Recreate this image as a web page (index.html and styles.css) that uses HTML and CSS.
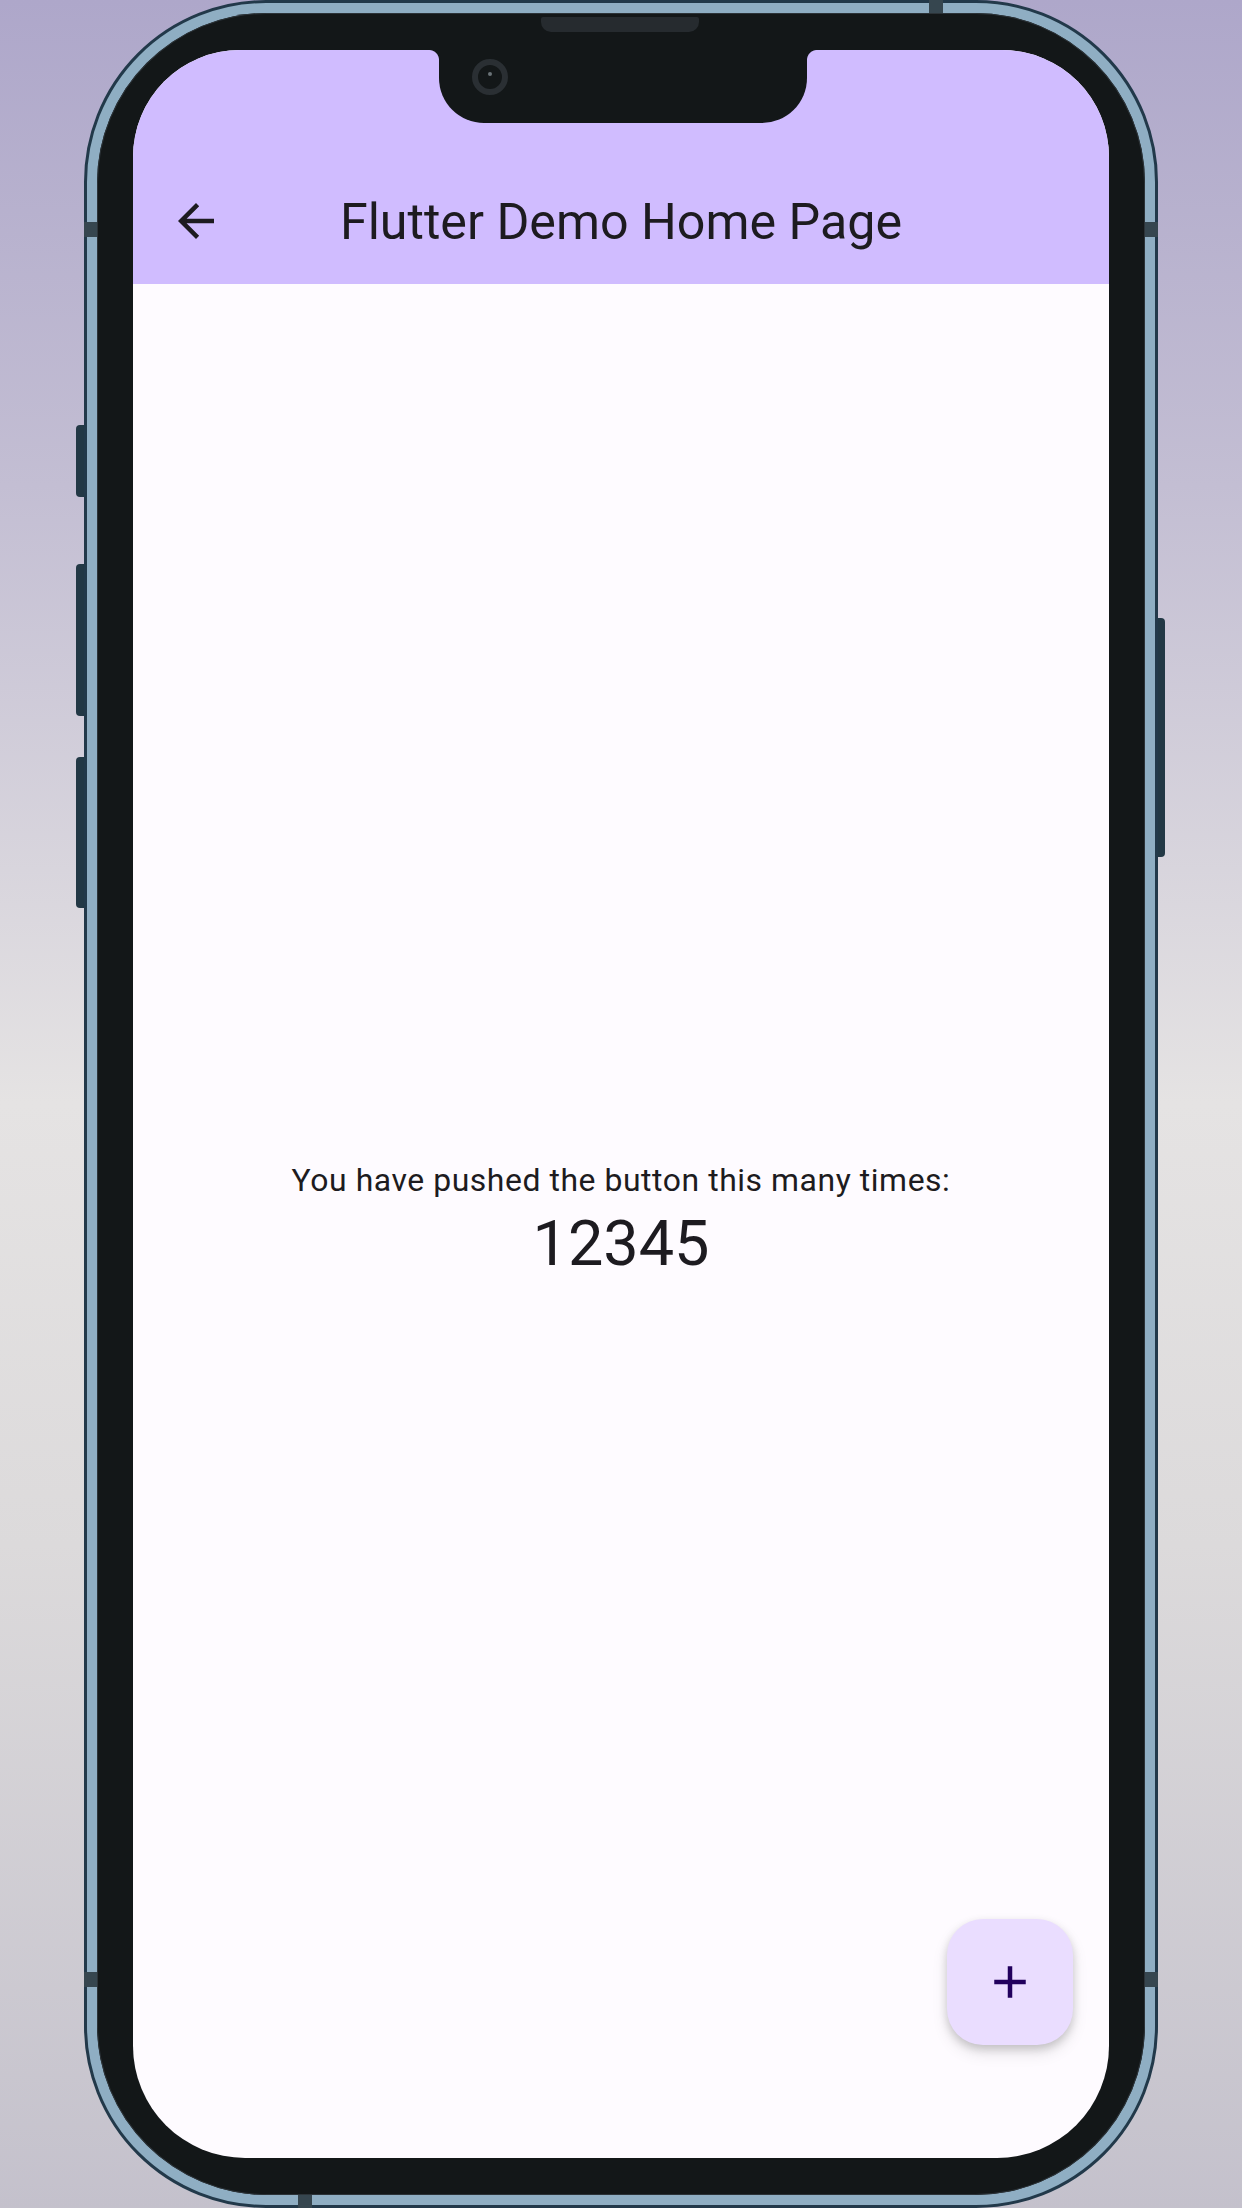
FILE: index.html
```html
<!DOCTYPE html>
<html lang="en">
<head>
<meta charset="utf-8">
<title>Flutter Demo Home Page</title>
<link rel="stylesheet" href="styles.css">
</head>
<body>
<div class="stage">
  <div class="phone">
    <span class="side-btn side-l1"></span>
    <span class="side-btn side-l2"></span>
    <span class="side-btn side-l3"></span>
    <span class="side-btn side-r1"></span>
    <span class="band band-lt"></span>
    <span class="band band-lb"></span>
    <span class="band band-rt"></span>
    <span class="band band-rb"></span>
    <span class="band-h band-top"></span>
    <span class="band-h band-bottom"></span>
    <div class="bezel">
      <div class="screen">
        <header class="appbar">
          <div class="statusbar"></div>
          <div class="toolbar">
            <button class="leading" aria-label="Back">
              <svg viewBox="0 0 24 24" width="54" height="54"><path d="M20 11H7.83l5.590-5.59L12 4l-8 8 8 8 1.41-1.41L7.83 13H20v-2z"/></svg>
            </button>
            <h1 class="title">Flutter Demo Home Page</h1>
            <span class="trailing"></span>
          </div>
        </header>
        <main class="content">
          <p class="label">You have pushed the button this many times:</p>
          <p class="count">12345</p>
        </main>
        <button class="fab" aria-label="Increment">
          <svg viewBox="0 0 24 24" width="54" height="54"><path d="M19 13h-6v6h-2v-6H5v-2h6V5h2v6h6v2z"/></svg>
        </button>
      </div>
    </div>
    <div class="speaker"></div>
    <div class="notch">
      <span class="ear ear-l"></span>
      <span class="ear ear-r"></span>
      <span class="camera"><span class="lens"></span></span>
    </div>
  </div>
</div>
</body>
</html>
```
FILE: styles.css
```css
* { box-sizing: border-box; }

html, body {
  margin: 0;
  padding: 0;
}

body {
  width: 1242px;
  height: 2208px;
  overflow: hidden;
  font-family: Roboto, "Noto Sans", sans-serif;
  background: linear-gradient(180deg, #aea7ca 0%, #c3bed3 22%, #e5e3e3 50%, #dcdadb 70%, #c4c1cc 100%);
}

.stage {
  display: flex;
  justify-content: center;
  height: 2208px;
}

.phone {
  position: relative;
  width: 1074px;
  height: 2208px;
  border: 3px solid #22394a;
  border-radius: 182px;
  background: #8faec3;
  padding: 10px;
}

.side-btn {
  position: absolute;
  width: 8px;
  background: #223845;
  z-index: -1;
}
.side-l1, .side-l2, .side-l3 { left: -11px; border-radius: 4px 0 0 4px; }
.side-l1 { top: 422px; height: 72px; }
.side-l2 { top: 561px; height: 152px; }
.side-l3 { top: 754px; height: 151px; }
.side-r1 { right: -10px; top: 615px; height: 239px; border-radius: 0 4px 4px 0; }

.band {
  position: absolute;
  width: 13px;
  height: 15px;
  background: #36464f;
}
.band-lt { left: -3px; top: 219px; }
.band-lb { left: -3px; top: 1969px; }
.band-rt { right: -3px; top: 219px; }
.band-rb { right: -3px; top: 1969px; }

.band-h {
  position: absolute;
  width: 14px;
  height: 13px;
  background: #36464f;
}
.band-top { top: -3px; left: 842px; }
.band-bottom { bottom: -3px; left: 211px; }

.bezel {
  height: 100%;
  background: #131718;
  border-radius: 170px;
  padding: 37px 36px;
  box-shadow: inset 0 0 0 1px #2c3338;
}

.screen {
  position: relative;
  height: 100%;
  border-radius: 107px 107px 112px 112px;
  overflow: hidden;
  background: #fefbff;
  display: flex;
  flex-direction: column;
}

.appbar {
  background: #d0bcff;
  flex: none;
}

.statusbar { height: 108px; }

.toolbar {
  height: 126px;
  display: grid;
  grid-template-columns: 126px 1fr 126px;
  align-items: center;
}

.leading {
  width: 126px;
  height: 126px;
  border: 0;
  padding: 0;
  background: transparent;
  display: flex;
  align-items: center;
  justify-content: center;
}
.leading svg { fill: #1d1b20; display: block; }

.title {
  margin: 0;
  text-align: center;
  font-weight: 400;
  font-size: 50.2px;
  line-height: 63px;
  color: #1d1b20;
  white-space: nowrap;
}

.content {
  flex: 1;
  display: flex;
  flex-direction: column;
  align-items: center;
  justify-content: center;
  color: #1d1b20;
}

.label {
  margin: 0;
  font-size: 31.9px;
  line-height: 45px;
  letter-spacing: 0.56px;
}

.count {
  margin: 0;
  font-size: 63px;
  line-height: 81px;
}

.fab {
  position: absolute;
  right: 36px;
  bottom: 113px;
  width: 126px;
  height: 126px;
  border: 0;
  padding: 0;
  border-radius: 36px;
  background: #eaddff;
  display: flex;
  align-items: center;
  justify-content: center;
  box-shadow: 0 4px 8px rgba(0, 0, 0, 0.16), 0 8px 16px rgba(0, 0, 0, 0.10);
}
.fab svg { fill: #21005d; display: block; }

.speaker {
  position: absolute;
  left: 454px;
  top: 14px;
  width: 158px;
  height: 15px;
  background: #262b2f;
  border-radius: 2px 2px 10px 10px;
}

.notch {
  position: absolute;
  left: 352px;
  top: 47px;
  width: 368px;
  height: 73px;
  background: #131718;
  border-radius: 0 0 45px 45px;
}

.ear {
  position: absolute;
  top: 0;
  width: 10px;
  height: 10px;
}
.ear-l {
  left: -10px;
  background: radial-gradient(circle at 0 100%, transparent 9.5px, #131718 10.5px);
}
.ear-r {
  right: -10px;
  background: radial-gradient(circle at 100% 100%, transparent 9.5px, #131718 10.5px);
}

.camera {
  position: absolute;
  left: 33px;
  top: 9px;
  width: 36px;
  height: 36px;
  border-radius: 50%;
  border: 6px solid #2a2f33;
  background: #131718;
}
.lens {
  position: absolute;
  left: 10px;
  top: 7px;
  width: 4px;
  height: 4px;
  border-radius: 50%;
  background: #6b7378;
}
```
